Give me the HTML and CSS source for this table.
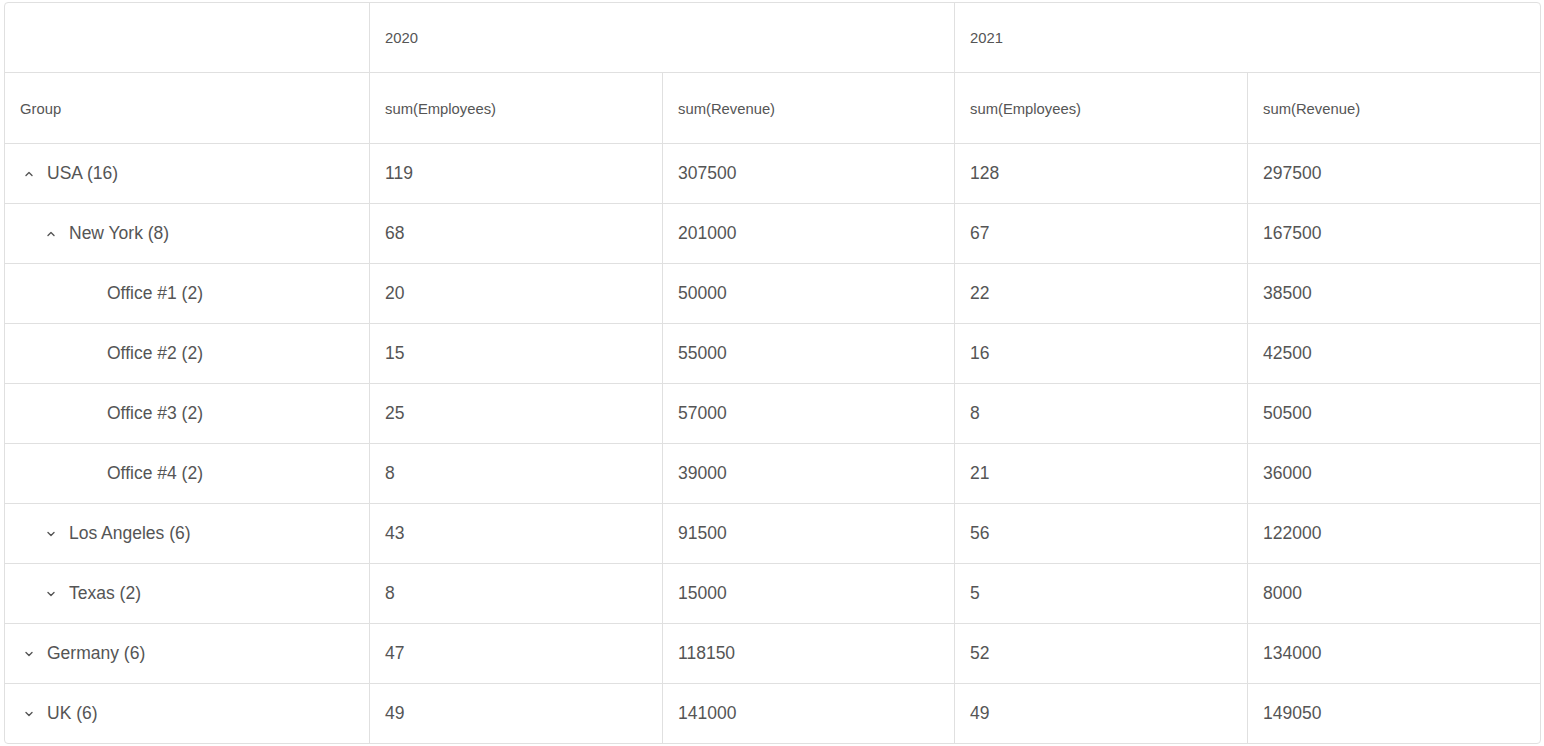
FILE: index.html
```html
<!DOCTYPE html>
<html>
<head>
<meta charset="utf-8">
<link rel="stylesheet" href="styles.css">
</head>
<body>
<div class="grid-wrap">
<table class="pivot">
  <colgroup>
    <col class="c-group"><col class="c-a"><col class="c-b"><col class="c-a"><col class="c-last">
  </colgroup>
  <thead>
    <tr class="hrow1">
      <th></th>
      <th colspan="2">2020</th>
      <th colspan="2" class="last">2021</th>
    </tr>
    <tr class="hrow2">
      <th>Group</th>
      <th>sum(Employees)</th>
      <th>sum(Revenue)</th>
      <th>sum(Employees)</th>
      <th class="last">sum(Revenue)</th>
    </tr>
  </thead>
  <tbody>
    <tr>
      <td><div class="grp lvl0"><svg class="chev" viewBox="0 0 10 10"><polyline points="2,6.4 5,3.6 8,6.4"/></svg><span>USA (16)</span></div></td>
      <td>119</td><td>307500</td><td>128</td><td class="last">297500</td>
    </tr>
    <tr>
      <td><div class="grp lvl1"><svg class="chev" viewBox="0 0 10 10"><polyline points="2,6.4 5,3.6 8,6.4"/></svg><span>New York (8)</span></div></td>
      <td>68</td><td>201000</td><td>67</td><td class="last">167500</td>
    </tr>
    <tr>
      <td><div class="grp leaf"><span>Office #1 (2)</span></div></td>
      <td>20</td><td>50000</td><td>22</td><td class="last">38500</td>
    </tr>
    <tr>
      <td><div class="grp leaf"><span>Office #2 (2)</span></div></td>
      <td>15</td><td>55000</td><td>16</td><td class="last">42500</td>
    </tr>
    <tr>
      <td><div class="grp leaf"><span>Office #3 (2)</span></div></td>
      <td>25</td><td>57000</td><td>8</td><td class="last">50500</td>
    </tr>
    <tr>
      <td><div class="grp leaf"><span>Office #4 (2)</span></div></td>
      <td>8</td><td>39000</td><td>21</td><td class="last">36000</td>
    </tr>
    <tr>
      <td><div class="grp lvl1"><svg class="chev" viewBox="0 0 10 10"><polyline points="2,3.6 5,6.4 8,3.6"/></svg><span>Los Angeles (6)</span></div></td>
      <td>43</td><td>91500</td><td>56</td><td class="last">122000</td>
    </tr>
    <tr>
      <td><div class="grp lvl1"><svg class="chev" viewBox="0 0 10 10"><polyline points="2,3.6 5,6.4 8,3.6"/></svg><span>Texas (2)</span></div></td>
      <td>8</td><td>15000</td><td>5</td><td class="last">8000</td>
    </tr>
    <tr>
      <td><div class="grp lvl0"><svg class="chev" viewBox="0 0 10 10"><polyline points="2,3.6 5,6.4 8,3.6"/></svg><span>Germany (6)</span></div></td>
      <td>47</td><td>118150</td><td>52</td><td class="last">134000</td>
    </tr>
    <tr class="lastrow">
      <td><div class="grp lvl0"><svg class="chev" viewBox="0 0 10 10"><polyline points="2,3.6 5,6.4 8,3.6"/></svg><span>UK (6)</span></div></td>
      <td>49</td><td>141000</td><td>49</td><td class="last">149050</td>
    </tr>
  </tbody>
</table>
</div>
</body>
</html>
```

FILE: styles.css
```css
html, body {
  margin: 0;
  padding: 0;
  background: #ffffff;
}
body {
  padding: 2px 3px 0 4px;
  font-family: "Liberation Sans", Arial, sans-serif;
  color: #555555;
}
.grid-wrap {
  width: 1537px;
  box-sizing: border-box;
  border: 1px solid #e0e0e0;
  border-radius: 4px;
  overflow: hidden;
  background: #ffffff;
}
.pivot {
  width: 1535px;
  table-layout: fixed;
  border-collapse: separate;
  border-spacing: 0;
}
.c-group { width: 365px; }
.c-a { width: 293px; }
.c-b { width: 292px; }
.c-last { width: 292px; }
.pivot th, .pivot td {
  box-sizing: border-box;
  padding: 0 0 0 15px;
  text-align: left;
  vertical-align: middle;
  border-right: 1px solid #e0e0e0;
  border-bottom: 1px solid #e0e0e0;
  white-space: nowrap;
}
.pivot th.last, .pivot td.last {
  border-right: none;
}
.pivot th {
  font-weight: normal;
  font-size: 14.8px;
  color: #555555;
}
.hrow1 th { height: 70px; }
.hrow2 th { height: 71px; padding-top: 1px; }
.pivot td {
  height: 60px;
  font-size: 17.5px;
  color: #555555;
}
.lastrow td {
  height: 59px;
  border-bottom: none;
}
.grp {
  display: flex;
  align-items: center;
  height: 24px;
}
.chev {
  flex: none;
  width: 10px;
  height: 10px;
  margin-left: 4px;
  margin-right: 13px;
  fill: none;
  stroke: #555555;
  stroke-width: 1.4;
  stroke-linecap: round;
  stroke-linejoin: round;
}
.lvl0 { padding-left: 0; }
.lvl1 { padding-left: 22px; }
.leaf { padding-left: 87px; }
```
